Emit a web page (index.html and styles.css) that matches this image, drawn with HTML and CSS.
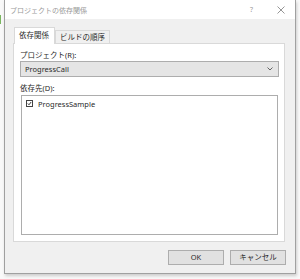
FILE: index.html
```html
<!DOCTYPE html>
<html>
<head>
  <title>プロジェクトの依存関係</title>
  <link rel="stylesheet" href="styles.css">
</head>
<body>
  <div class="desk">
    <div class="edge"><span class="mark"></span></div>

    <div class="dialog">
      <div class="titlebar">
        <span class="title">プロジェクトの依存関係</span>
        <span class="help">?</span>
        <span class="close">
          <svg width="8" height="8" viewBox="0 0 8 8"><path d="M0.5 0.5 L7.5 7.5 M7.5 0.5 L0.5 7.5" stroke="#8a8a8a" stroke-width="0.9" fill="none"/></svg>
        </span>
      </div>

      <div class="content">
        <div class="tabs">
          <div class="tab active">依存関係</div>
          <div class="tab">ビルドの順序</div>
        </div>

        <div class="panel">
          <div class="label">プロジェクト(R):</div>
          <div class="combo">
            <span>ProgressCall</span>
            <svg width="6" height="4" viewBox="0 0 6 4"><path d="M0.5 0.5 L3 3 L5.5 0.5" stroke="#555" stroke-width="0.9" fill="none"/></svg>
          </div>

          <div class="label deps">依存先(D):</div>
          <div class="list">
            <div class="item">
              <span class="check">
                <svg width="5" height="5" viewBox="0 0 6 6"><path d="M1 3 L2.4 4.5 L5 1.2" stroke="#222" stroke-width="1.1" fill="none"/></svg>
              </span>
              ProgressSample
            </div>
          </div>
        </div>

        <div class="buttons">
          <div class="btn">OK</div>
          <div class="btn">キャンセル</div>
        </div>
      </div>
    </div>
  </div>
</body>
</html>
```

FILE: styles.css
```css
body {
  margin: 0;
  background: #f9f9f9;
  font-family: "Noto Sans", "Noto Sans CJK JP", sans-serif;
  font-size: 7.5px;
  color: #2a2a2a;
}
.desk {
  display: flex;
  width: 300px;
  height: 279px;
}
.edge {
  width: 4px;
  position: relative;
}
.mark {
  position: absolute;
  left: 0;
  top: 15px;
  width: 1px;
  height: 9px;
  background: #7bb661;
}
.dialog {
  width: 290px;
  height: 273px;
  border: 1px solid #a0a0a0;
  border-top: none;
  box-shadow: 1px 2px 3px rgba(0, 0, 0, 0.18);
  display: flex;
  flex-direction: column;
  background: #f0f0f0;
}
.titlebar {
  height: 20px;
  background: #fff;
  display: flex;
  align-items: center;
  padding-left: 5px;
  color: #9a9a9a;
}
.title { flex: 1; font-size: 7px; }
.help { width: 27px; color: #9a9a9a; font-size: 7px; }
.close { width: 18px; display: flex; }
.content {
  flex: 1;
  display: flex;
  flex-direction: column;
  padding: 8px;
}
.tabs {
  display: flex;
  align-items: flex-end;
  height: 16px;
  margin-left: 1px;
  position: relative;
  z-index: 1;
}
.tab {
  height: 12px;
  padding: 0 4px;
  border: 1px solid #d9d9d9;
  border-bottom: none;
  line-height: 12px;
  background: #f0f0f0;
}
.tab.active {
  height: 16px;
  line-height: 15px;
  background: #fff;
  margin-bottom: -1px;
  width: 31px;
}
.panel {
  border: 1px solid #d9d9d9;
  background: #fff;
  padding: 0 5px 0 6px;
  box-sizing: border-box;
  width: 272px;
  height: 199px;
}
.label {
  margin-top: 5px;
  height: 12px;
  line-height: 12px;
}
.combo {
  height: 16px;
  border: 1px solid #adadad;
  background: #e5e5e5;
  box-sizing: border-box;
  display: flex;
  align-items: center;
  justify-content: space-between;
  padding: 0 5px 0 4px;
}
.deps { margin-top: 5px; }
.list {
  margin: 1px 1px 0;
  height: 140px;
  border: 1px solid #adadad;
  box-sizing: border-box;
  padding: 3px 4px;
}
.item {
  display: flex;
  align-items: center;
  gap: 5px;
  height: 9px;
}
.check {
  width: 5px;
  height: 5px;
  border: 1px solid #444;
  display: flex;
  align-items: center;
  justify-content: center;
}
.buttons {
  display: flex;
  justify-content: flex-end;
  gap: 6px;
  margin-top: 8px;
  margin-right: 1px;
}
.btn {
  width: 56px;
  height: 15px;
  box-sizing: border-box;
  border: 1px solid #adadad;
  background: #e1e1e1;
  text-align: center;
  line-height: 13px;
}
```
